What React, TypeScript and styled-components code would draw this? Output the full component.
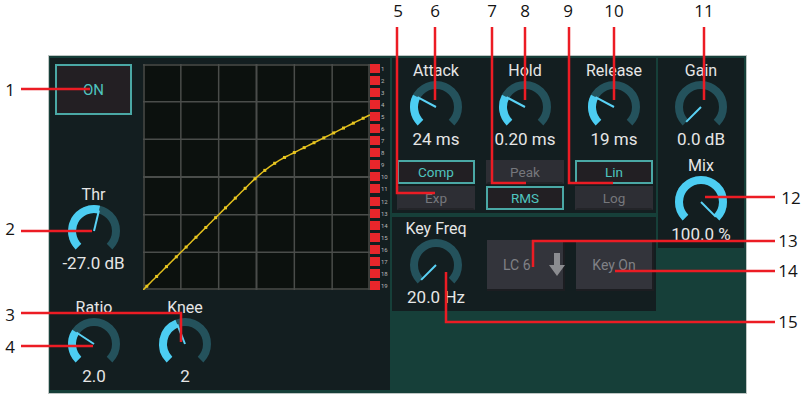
import React from "react";
import styled, { createGlobalStyle } from "styled-components";

const GlobalStyle = createGlobalStyle`
  html, body {
    margin: 0;
    padding: 0;
    background: #ffffff;
  }
  body {
    font-family: Roboto, "Liberation Sans", sans-serif;
  }
`;

// knob geometry: 270 degree arc starting bottom-left
const ARC_START = 135;
const ARC_SWEEP = 270;

const polar = (cx: number, cy: number, r: number, deg: number) => {
  const a = (deg * Math.PI) / 180;
  return [cx + r * Math.cos(a), cy + r * Math.sin(a)];
};

const arcPath = (cx: number, cy: number, r: number, from: number, to: number) => {
  const [x1, y1] = polar(cx, cy, r, from);
  const [x2, y2] = polar(cx, cy, r, to);
  const large = to - from > 180 ? 1 : 0;
  return `M ${x1} ${y1} A ${r} ${r} 0 ${large} 1 ${x2} ${y2}`;
};

const Dial = ({ level }: { level: number }) => {
  const cx = 30;
  const cy = 27;
  const r = 22;
  const end = ARC_START + ARC_SWEEP * level;
  const [px, py] = polar(cx, cy, 21, end);
  return (
    <svg width="60" height="50" viewBox="0 0 60 50">
      <path
        d={arcPath(cx, cy, r, ARC_START, ARC_START + ARC_SWEEP)}
        fill="none"
        stroke="#24525c"
        strokeWidth="8"
      />
      {level > 0 && (
        <path d={arcPath(cx, cy, r, ARC_START, end)} fill="none" stroke="#4ccdf2" strokeWidth="8" />
      )}
      <line x1={cx} y1={cy} x2={px} y2={py} stroke="#5ad2f5" strokeWidth="2" />
    </svg>
  );
};

type KnobProps = { label: string; value: string; level: number };

const Knob = ({ label, value, level }: KnobProps) => (
  <KnobBox>
    <KnobLabel>{label}</KnobLabel>
    <Dial level={level} />
    <KnobValue>{value}</KnobValue>
  </KnobBox>
);

// transfer curve: threshold -27 dB, ratio 2, soft knee
const CurveGraph = () => {
  const W = 227;
  const H = 226;
  const toX = (db: number) => ((db + 60) / 60) * W;
  const toY = (db: number) => H - ((db + 60) / 60) * H;
  const out = (x: number) => {
    const T = -27;
    const R = 2;
    const K = 10;
    if (x < T - K / 2) return x;
    if (x > T + K / 2) return T + (x - T) / R;
    const d = x - T + K / 2;
    return x + ((1 / R - 1) * d * d) / (2 * K);
  };
  const pts: string[] = [];
  for (let db = -60; db <= 0; db += 0.5) pts.push(`${toX(db)},${toY(out(db))}`);
  const dots: number[] = [];
  for (let db = -59; db <= 0; db += 2.6) dots.push(db);
  const grid = [0, 1, 2, 3, 4, 5, 6];

  return (
    <svg width={W} height={H} viewBox={`0 0 ${W} ${H}`}>
      <rect x="0" y="0" width={W} height={H} fill="#0c110e" />
      {grid.map((i) => {
        const x = Math.min(Math.max((i * W) / 6, 1), W - 1);
        const y = Math.min(Math.max((i * H) / 6, 1), H - 1);
        return (
          <g key={i} stroke="#4a4d4a" strokeWidth={i === 3 ? 2 : 1.5}>
            <line x1={x} y1={0} x2={x} y2={H} />
            <line x1={0} y1={y} x2={W} y2={y} />
          </g>
        );
      })}
      <polyline points={pts.join(" ")} fill="none" stroke="#e2bf1d" strokeWidth="1.5" />
      {dots.map((db) => (
        <rect
          key={db}
          x={toX(db) - 1.5}
          y={toY(out(db)) - 1.5}
          width="3"
          height="3"
          fill="#e8c620"
        />
      ))}
    </svg>
  );
};

const ArrowDownIcon = () => (
  <svg width="18" height="24" viewBox="0 0 18 24">
    <polygon points="6,0 12,0 12,12 17,12 9,23 1,12 6,12" fill="#8b8c90" />
  </svg>
);

const calloutLines: number[][][] = [
  [[21, 89], [90, 89]],
  [[21, 231], [92, 231]],
  [[21, 313], [181, 313], [181, 342]],
  [[21, 346], [93, 346]],
  [[397, 27], [397, 193], [435, 193]],
  [[435, 27], [435, 100]],
  [[492, 27], [492, 183], [526, 183]],
  [[525, 27], [525, 100]],
  [[569, 27], [569, 183], [613, 183]],
  [[614, 27], [614, 100]],
  [[704, 27], [704, 100]],
  [[705, 197], [775, 197]],
  [[775, 241], [533, 241], [533, 267]],
  [[615, 271], [775, 271]],
  [[775, 322], [446, 322], [446, 272]],
];

const calloutNums: [string, number, number][] = [
  ["1", 10, 90],
  ["2", 10, 229],
  ["3", 10, 315],
  ["4", 10, 347],
  ["5", 398, 11],
  ["6", 435, 11],
  ["7", 492, 11],
  ["8", 525, 11],
  ["9", 568, 11],
  ["10", 614, 11],
  ["11", 704, 11],
  ["12", 791, 198],
  ["13", 788, 241],
  ["14", 788, 271],
  ["15", 788, 322],
];

const meterRows = Array.from({ length: 19 }, (_, i) => i + 1);

const App = () => {
  return (
    <Page>
      <GlobalStyle />
      <Frame>
        <LeftPanel>
          <TopArea>
            <LeftCol>
              <OnButton>ON</OnButton>
              <ThrSlot>
                <Knob label="Thr" value="-27.0 dB" level={0.55} />
              </ThrSlot>
            </LeftCol>
            <GraphBox>
              <CurveGraph />
            </GraphBox>
            <Meter>
              {meterRows.map((n) => (
                <MeterRow key={n}>
                  <MeterCell />
                  <MeterNum>{n}</MeterNum>
                </MeterRow>
              ))}
            </Meter>
          </TopArea>
          <BottomRow>
            <Knob label="Ratio" value="2.0" level={0.29} />
            <Knob label="Knee" value="2" level={0.42} />
          </BottomRow>
        </LeftPanel>

        <MiddleCol>
          <DynamicsPanel>
            <Column>
              <Knob label="Attack" value="24 ms" level={0.27} />
              <ButtonStack>
                <ModeButton $active>Comp</ModeButton>
                <ModeButton>Exp</ModeButton>
              </ButtonStack>
            </Column>
            <Column>
              <Knob label="Hold" value="0.20 ms" level={0.27} />
              <ButtonStack>
                <ModeButton>Peak</ModeButton>
                <ModeButton $active>RMS</ModeButton>
              </ButtonStack>
            </Column>
            <Column>
              <Knob label="Release" value="19 ms" level={0.27} />
              <ButtonStack>
                <ModeButton $active>Lin</ModeButton>
                <ModeButton>Log</ModeButton>
              </ButtonStack>
            </Column>
          </DynamicsPanel>
          <KeyPanel>
            <Knob label="Key Freq" value="20.0 Hz" level={0} />
            <PadButton $split>
              <span>LC 6</span>
              <ArrowDownIcon />
            </PadButton>
            <PadButton>Key On</PadButton>
          </KeyPanel>
        </MiddleCol>

        <RightPanel>
          <Knob label="Gain" value="0.0 dB" level={0} />
          <MixSlot>
            <Knob label="Mix" value="100.0 %" level={1} />
          </MixSlot>
        </RightPanel>
      </Frame>

      <CalloutLayer width="807" height="401" viewBox="0 0 807 401">
        {calloutLines.map((pts, i) => (
          <polyline
            key={i}
            points={pts.map((p) => p.join(",")).join(" ")}
            fill="none"
            stroke="#ec1c24"
            strokeWidth="2.5"
          />
        ))}
      </CalloutLayer>
      {calloutNums.map(([t, x, y]) => (
        <CalloutNum key={t} $x={x} $y={y}>
          {t}
        </CalloutNum>
      ))}
    </Page>
  );
};

const Page = styled.div`
  position: relative;
  width: 807px;
  height: 401px;
  overflow: hidden;
  padding-top: 55px;
  box-sizing: border-box;
`;

const Frame = styled.div`
  margin-left: 48px;
  width: 699px;
  height: 339px;
  box-sizing: border-box;
  border: 1px solid #bfc6c4;
  background: #163f39;
  padding: 2px 1px 2px 1px;
  display: flex;
  gap: 2px;
  align-items: flex-start;
`;

const Panel = styled.div`
  background: #131e20;
  box-sizing: border-box;
`;

const LeftPanel = styled(Panel)`
  width: 340px;
  height: 332px;
  display: flex;
  flex-direction: column;
`;

const TopArea = styled.div`
  display: flex;
  padding: 6px 0 0 5px;
`;

const LeftCol = styled.div`
  width: 77px;
  display: flex;
  flex-direction: column;
  align-items: center;
  margin-right: 11px;
`;

const OnButton = styled.div`
  width: 77px;
  height: 51px;
  box-sizing: border-box;
  background: #231f23;
  border: 2px solid #4aa8a5;
  color: #4fc4bf;
  font-size: 15px;
  display: flex;
  align-items: center;
  justify-content: center;
`;

const ThrSlot = styled.div`
  margin-top: 71px;
`;

const GraphBox = styled.div`
  width: 227px;
  height: 226px;
  svg {
    display: block;
  }
`;

const Meter = styled.div`
  width: 20px;
  height: 226px;
  display: flex;
  flex-direction: column;
  justify-content: space-between;
`;

const MeterRow = styled.div`
  display: flex;
  align-items: center;
  height: 9px;
  gap: 1px;
`;

const MeterCell = styled.div`
  width: 10px;
  height: 9px;
  background: #e8262b;
`;

const MeterNum = styled.span`
  font-size: 6px;
  line-height: 9px;
  color: #b8b8b8;
`;

const BottomRow = styled.div`
  display: flex;
  gap: 11px;
  padding: 9px 0 0 4px;
`;

const MiddleCol = styled.div`
  width: 264px;
  display: flex;
  flex-direction: column;
  gap: 4px;
`;

const DynamicsPanel = styled(Panel)`
  height: 155px;
  display: grid;
  grid-template-columns: repeat(3, 80px);
  column-gap: 9px;
  padding: 4px 0 0 4px;
`;

const Column = styled.div`
  display: flex;
  flex-direction: column;
  align-items: center;
`;

const ButtonStack = styled.div`
  margin-top: 12px;
  display: flex;
  flex-direction: column;
  gap: 2px;
`;

const ModeButton = styled.div<{ $active?: boolean }>`
  width: 78px;
  height: 24px;
  box-sizing: border-box;
  display: flex;
  align-items: center;
  justify-content: center;
  font-size: 13.5px;
  background: ${(p) => (p.$active ? "#221f23" : "#2d2e34")};
  border: 2px solid ${(p) => (p.$active ? "#4aa8a5" : "#2d2e34")};
  border-bottom-color: ${(p) => (p.$active ? "#4aa8a5" : "#232428")};
  color: ${(p) => (p.$active ? "#4fc4bf" : "#76777c")};
`;

const KeyPanel = styled(Panel)`
  height: 94px;
  display: flex;
  align-items: flex-start;
  gap: 11px;
  padding: 3px 0 0 4px;
`;

const PadButton = styled.div<{ $split?: boolean }>`
  margin-top: 20px;
  width: 78px;
  height: 51px;
  box-sizing: border-box;
  background: #33343b;
  border-right: 2px solid #1c1d21;
  border-bottom: 2px solid #1c1d21;
  color: #808186;
  font-size: 14px;
  white-space: nowrap;
  display: flex;
  align-items: center;
  justify-content: ${(p) => (p.$split ? "flex-start" : "center")};
  gap: 17px;
  padding-left: ${(p) => (p.$split ? "16px" : "0")};
  svg {
    display: block;
    flex: none;
  }
`;

const RightPanel = styled(Panel)`
  width: 86px;
  height: 190px;
  padding-top: 4px;
  display: flex;
  flex-direction: column;
  align-items: center;
`;

const MixSlot = styled.div`
  margin-top: 9px;
`;

const KnobBox = styled.div`
  width: 80px;
  display: flex;
  flex-direction: column;
  align-items: center;
  color: #e6e6e6;
  svg {
    display: block;
  }
`;

const KnobLabel = styled.div`
  font-size: 16px;
  line-height: 18px;
  height: 18px;
  white-space: nowrap;
`;

const KnobValue = styled.div`
  font-size: 17px;
  line-height: 18px;
  height: 18px;
  white-space: nowrap;
`;

const CalloutLayer = styled.svg`
  position: absolute;
  left: 0;
  top: 0;
  pointer-events: none;
`;

const CalloutNum = styled.span<{ $x: number; $y: number }>`
  position: absolute;
  left: ${(p) => p.$x}px;
  top: ${(p) => p.$y}px;
  transform: translate(-50%, -50%);
  font-family: "Open Sans", "Noto Sans", sans-serif;
  font-size: 17px;
  line-height: 20px;
  color: #141414;
`;

export default App;
